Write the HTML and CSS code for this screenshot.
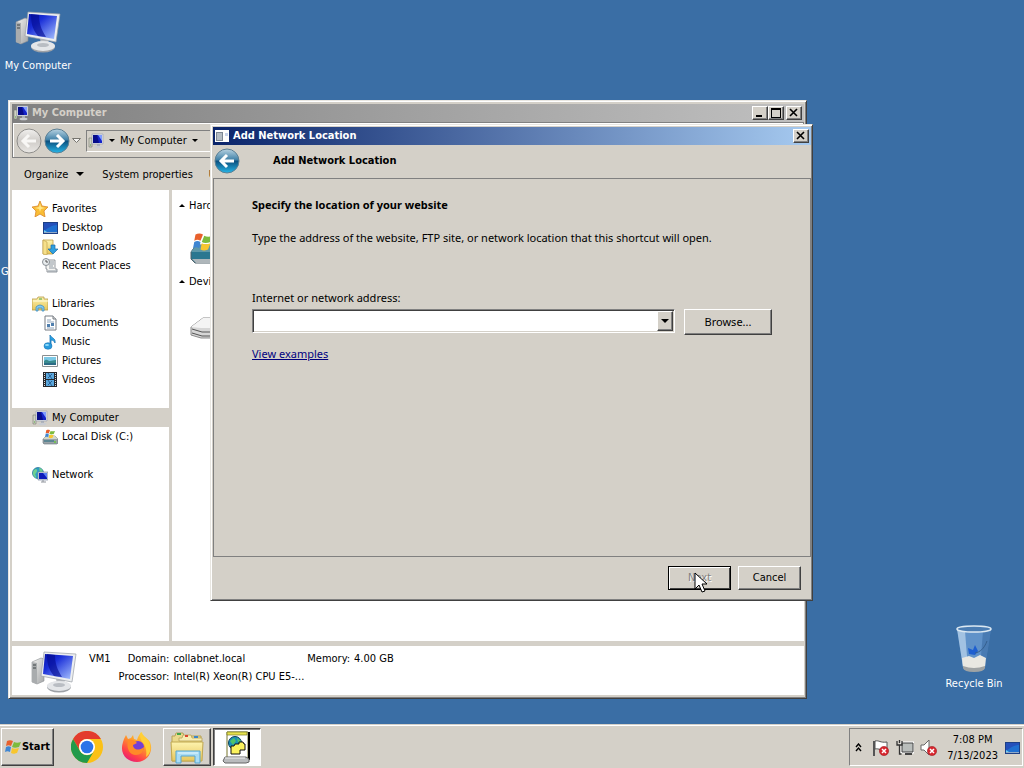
FILE: index.html
```html
<!DOCTYPE html>
<html lang="en">
<head>
    <meta charset="UTF-8">
    <meta name="viewport" content="width=device-width, initial-scale=1.0">
    <title>Add Network Location</title>
    <link rel="stylesheet" href="styles.css">
</head>
<body>
    <!-- Shared icons -->
    <svg class="sprite" width="0" height="0" aria-hidden="true">
        <defs>
            <linearGradient id="screen" x1="0" y1="0" x2="1" y2="1">
                <stop offset="0" stop-color="#0412a8"/>
                <stop offset="0.35" stop-color="#1a2fd8"/>
                <stop offset="1" stop-color="#a9c3ff"/>
            </linearGradient>
            <linearGradient id="metal" x1="0" y1="0" x2="1" y2="1">
                <stop offset="0" stop-color="#f4f4f2"/>
                <stop offset="1" stop-color="#a4a6a8"/>
            </linearGradient>
            <linearGradient id="orb" x1="0" y1="0" x2="0" y2="1">
                <stop offset="0" stop-color="#b9d3e2"/>
                <stop offset="0.46" stop-color="#3d7fa6"/>
                <stop offset="0.5" stop-color="#0b4f7e"/>
                <stop offset="1" stop-color="#27b6e8"/>
            </linearGradient>
            <linearGradient id="orbOff" x1="0" y1="0" x2="0" y2="1">
                <stop offset="0" stop-color="#f1f0ee"/>
                <stop offset="0.5" stop-color="#cfccc8"/>
                <stop offset="1" stop-color="#e9e7e4"/>
            </linearGradient>
            <linearGradient id="folder" x1="0" y1="0" x2="0" y2="1">
                <stop offset="0" stop-color="#fdf3ae"/>
                <stop offset="1" stop-color="#e7c65c"/>
            </linearGradient>
            <linearGradient id="fox" x1="0.8" y1="0" x2="0.2" y2="1">
                <stop offset="0" stop-color="#ffe33d"/>
                <stop offset="0.4" stop-color="#ff9a2a"/>
                <stop offset="0.75" stop-color="#ff3f4a"/>
                <stop offset="1" stop-color="#e3167e"/>
            </linearGradient>
        </defs>
        <symbol id="i-computer" viewBox="0 0 48 44">
            <path d="M2 12 L11 8 L14 9 L14 31 L7 34 L2 32 Z" fill="url(#metal)" stroke="#8b8f92" stroke-width="0.6"/>
            <path d="M2 12 L7 13 L7 34 L2 32 Z" fill="#a9acae"/>
            <path d="M3 15h3M3 18h3" stroke="#3f4447" stroke-width="1.2"/>
            <path d="M26 28 L35 30 L33 36 L27 36 Z" fill="#b9bcc0"/>
            <ellipse cx="29" cy="37" rx="12" ry="5.500" fill="#9da1a6"/>
            <ellipse cx="29" cy="36" rx="12" ry="5" fill="#e4e6e9"/>
            <ellipse cx="29" cy="35" rx="6" ry="2" fill="#b9bdc3"/>
            <path d="M14 2 L46 4 L42 32 L11 26 Z" fill="#eceef0" stroke="#9a9fa6" stroke-width="0.700"/>
            <path d="M15 4 L43 6 L40 29 L13 24 Z" fill="url(#screen)"/>
            <path d="M17 4 L25 5 C25 13 27 19 32 27 L24 26 C18 19 17 12 17 4 Z" fill="#040c94" opacity="0.650"/>
        </symbol>
        <symbol id="i-pc" viewBox="0 0 16 16">
            <path d="M1 5h3v9h-3z" fill="#cfd2c4" stroke="#777b70" stroke-width="0.600"/>
            <path d="M2 12h1" stroke="#4fa83d"/>
            <path d="M4 1h11v10h-11z" fill="#dde0e6" stroke="#8b93a6" stroke-width="0.500"/>
            <path d="M5 2h9v8h-9z" fill="#1422c8"/>
            <path d="M10 2h4v6z" fill="#7f9bff"/>
            <path d="M5 2h4l2 8h-6z" fill="#060c8a"/>
            <path d="M9 11h3v2h-3z" fill="#a9aeb8"/>
            <ellipse cx="10.500" cy="14" rx="4" ry="1.300" fill="#c9ccd2"/>
        </symbol>
        <symbol id="i-flag" viewBox="0 0 16 16">
            <path d="M2 2c2-1 4-1 6 0l-2 5c-2-1-3-1-5 0z" fill="#e8602c"/>
            <path d="M9 3c2 1 4 1 7 0l-2 5c-3 1-5 1-7 0z" fill="#7dbb3c"/>
            <path d="M1 8c2-1 3-1 5 0l-1 5c-2-1-3-1-5 0z" fill="#3f86d2"/>
            <path d="M7 9c2 1 4 1 7 0l-2 5c-3 1-4 1-6 0z" fill="#f8c62e"/>
        </symbol>
        <symbol id="i-disk" viewBox="0 0 16 16">
            <path d="M1 10l3-3h9l3 3v4l-1 1h-13l-1-1z" fill="#9aa3a8" stroke="#66747a" stroke-width="0.600"/>
            <path d="M1 10h15l-3-3h-9z" fill="#d4d8c8"/>
            <path d="M2 12h10" stroke="#487d8c" stroke-width="1.500"/>
            <path d="M12 13h2" stroke="#67c83f" stroke-width="1.500"/>
            <use href="#i-flag" x="2" y="0" width="12" height="10"/>
        </symbol>
        <symbol id="i-desktop" viewBox="0 0 16 16">
            <path d="M1 2h15v12h-15z" fill="#1d3f86"/>
            <path d="M2 3h13v9h-13z" fill="#1f6fd0"/>
            <path d="M2 3h13v2c-5 0-9 3-13 6z" fill="#2450bb"/>
            <path d="M2 12h13v1h-13z" fill="#8fa9c8"/>
            <path d="M2 10l3 2h-3z" fill="#6bd2f2"/>
        </symbol>
        <symbol id="i-badge" viewBox="0 0 10 10">
            <circle cx="5" cy="5" r="4.600" fill="#d8262e" stroke="#9d1c22" stroke-width="0.600"/>
            <path d="M3 3l4 4M7 3l-4 4" stroke="#fff" stroke-width="1.500"/>
        </symbol>
    </svg>

    <main class="desktop">
        <div class="shortcut shortcut-computer">
            <svg width="48" height="44"><use href="#i-computer"/></svg>
            <span>My Computer</span>
        </div>
        <div class="shortcut shortcut-google">
            <span>Google</span>
        </div>
        <div class="shortcut shortcut-bin">
            <svg width="42" height="50" viewBox="0 0 42 50">
                <path d="M4 5 L38 5 L32 43 Q31 47 21 47 Q11 47 10 43 Z" fill="#6d9fd6" opacity="0.750"/>
                <path d="M4 5 L12 7 L15 45 Q11 45 10 43 Z" fill="#cfe3f3" opacity="0.600"/>
                <path d="M38 5 L30 7 L27 45 Q31 45 32 43 Z" fill="#2f5f99" opacity="0.450"/>
                <path d="M9 34 L16 32 L21 34 L27 31 L33 34 L32 43 Q31 47 21 47 Q11 47 10 43 Z" fill="#e9e8e2"/>
                <path d="M10 42 Q21 46 32 42 L32 44 Q31 48 21 48 Q11 48 10 44 Z" fill="#9fa3a4"/>
                <path d="M15 24l5 2 2-5 3 6-3 4-6-1z" fill="#1e5fd0"/>
                <path d="M34 17C31 25 27 28 22 29" fill="none" stroke="#355f8e" stroke-width="1"/>
                <ellipse cx="21" cy="5" rx="17" ry="3" fill="#4a7cb2" stroke="#dbe8f2" stroke-width="1.500"/>
            </svg>
            <span>Recycle Bin</span>
        </div>

        <section class="window explorer">
            <header class="titlebar titlebar-inactive">
                <svg width="16" height="16"><use href="#i-pc"/></svg>
                <h2>My Computer</h2>
                <div class="caption-buttons">
                    <button type="button" class="caption-btn" aria-label="Minimize"><svg width="12" height="10"><path d="M2 7h6v2h-6z"/></svg></button>
                    <button type="button" class="caption-btn" aria-label="Maximize"><svg width="12" height="10"><path d="M1 0h10v10h-10zM2 2v7h8v-7z" fill-rule="evenodd"/></svg></button>
                    <button type="button" class="caption-btn caption-close" aria-label="Close"><svg width="12" height="10"><path d="M2 1l7 7M9 1l-7 7" stroke="#000" stroke-width="1.600"/></svg></button>
                </div>
            </header>

            <nav class="nav-bar">
                <button type="button" class="orb" aria-label="Back" disabled><svg width="26" height="26" viewBox="0 0 26 26"><circle cx="13" cy="13" r="12" fill="url(#orbOff)" stroke="#8f8e8b"/><path d="M20 13h-12M13 7l-6 6 6 6" fill="none" stroke="#f8f7f5" stroke-width="3"/></svg></button>
                <button type="button" class="orb" aria-label="Forward"><svg width="26" height="26" viewBox="0 0 26 26"><circle cx="13" cy="13" r="12" fill="url(#orb)" stroke="#5c7f93"/><path d="M6 13h12M13 7l6 6-6 6" fill="none" stroke="#fff" stroke-width="3"/></svg></button>
                <button type="button" class="orb-menu" aria-label="Recent pages"><svg width="9" height="6"><path d="M0.500 0.500h8l-4 4z" fill="#f4f3f1" stroke="#77756f"/></svg></button>
                <div class="address">
                    <svg width="16" height="16"><use href="#i-pc"/></svg>
                    <svg width="6" height="4"><path d="M0 0h6l-3 3z"/></svg>
                    <span>My Computer</span>
                    <svg width="6" height="4"><path d="M0 0h6l-3 3z"/></svg>
                </div>
            </nav>

            <div class="command-bar">
                <button type="button" class="command command-menu">Organize <svg width="8" height="5"><path d="M0 0h8l-4 4z"/></svg></button>
                <button type="button" class="command">System properties</button>
                <button type="button" class="command">Uninstall or change a program</button>
            </div>

            <div class="panes">
                <ul class="tree">
                    <li class="group"><svg width="16" height="16"><path d="M8 0l2 5 6 1-4 4 1 6-5-3-5 3 1-6-4-4 6-1z" fill="#f9bd35" stroke="#d9872a" stroke-width="0.800"/><path d="M8 2l1 4 4 1-4 1-1 3-1-3-4-1 4-1z" fill="#ffe78a"/></svg>Favorites</li>
                    <li><svg width="16" height="16"><use href="#i-desktop"/></svg>Desktop</li>
                    <li><svg width="16" height="16"><path d="M1 1h10v14h-10z" fill="url(#folder)" stroke="#bd9c45" stroke-width="0.800"/><path d="M1 1l4 2v13l-4-1z" fill="#f6e08a" stroke="#bd9c45" stroke-width="0.600"/><path d="M9 6h4v4h3l-5 5-5-5h3z" fill="#2fa0e0" stroke="#1c6ba6" stroke-width="0.700"/></svg>Downloads</li>
                    <li><svg width="16" height="16"><path d="M4 2h9v9h2v3h-10v-3h-1z" fill="#f5f5f3" stroke="#8a9096" stroke-width="0.900"/><path d="M7 4h5M7 6h5M7 8h4M7 10h5M6 13h9" stroke="#8f9aa4"/><circle cx="4" cy="4" r="3.500" fill="#e8ecee" stroke="#8a9096"/><path d="M4 2v2h2" fill="none" stroke="#555"/></svg>Recent Places</li>
                    <li class="gap"></li>
                    <li class="group"><svg width="16" height="16"><path d="M0 3h5l1-2h6v2h4v11h-16z" fill="url(#folder)" stroke="#b89a45" stroke-width="0.800"/><path d="M1 5h15" stroke="#fffbe0"/><path d="M7 3h3" stroke="#49a34c"/><path d="M4 15v-4q4-4 8 0v4h-2v-3h-4v3z" fill="#85c9ef" stroke="#3f8fc0" stroke-width="0.800"/></svg>Libraries</li>
                    <li><svg width="16" height="16"><path d="M3 1h8l3 3v11h-11z" fill="#fff" stroke="#777d84"/><path d="M11 1v3h3" fill="#ddd" stroke="#777d84"/><path d="M5 5h4M5 7h7M5 13h7" stroke="#8fa4bb"/><path d="M5 9h3v3h-3zM9 8h3v3h-3z" fill="#4f7fae"/></svg>Documents</li>
                    <li><svg width="16" height="16"><path d="M8 1c1 3 6 3 5 8-1-2-2-3-4-3v6h-1z" fill="#2aa3e6" stroke="#1c76b5" stroke-width="0.800"/><ellipse cx="6" cy="12" rx="4" ry="3.300" fill="#299bdd" stroke="#1c76b5" stroke-width="0.600"/><ellipse cx="5" cy="11" rx="2" ry="1" fill="#92dcfa"/></svg>Music</li>
                    <li><svg width="16" height="16"><path d="M0.500 2.500h15v11h-15z" fill="#fff" stroke="#8a8f91"/><path d="M2 4h12v8h-12z" fill="#7cc9e6"/><path d="M2 8c3-3 4 0 6 0s3-1 6-1v3h-12z" fill="#3a8b8f"/><path d="M2 10h12v2h-12z" fill="#2d6c86"/></svg>Pictures</li>
                    <li><svg width="16" height="16"><path d="M1 0h14v15h-14z" fill="#26282c"/><path d="M4 1h8v6h-8zM4 8h8v6h-8z" fill="#5aa7dc"/><path d="M6 1l4 6M10 2l-4 4M6 8l4 6M10 9l-4 4" stroke="#2a5f93"/><path d="M2.500 1v14M13.500 1v14" stroke="#d9dcdf" stroke-width="1" stroke-dasharray="1 1"/></svg>Videos</li>
                    <li class="gap"></li>
                    <li class="group selected"><svg width="16" height="16"><use href="#i-pc"/></svg>My Computer</li>
                    <li><svg width="16" height="16"><use href="#i-disk"/></svg>Local Disk (C:)</li>
                    <li class="gap"></li>
                    <li class="group"><svg width="16" height="16"><circle cx="6" cy="6" r="5.500" fill="#2f9dc4" stroke="#176a8c" stroke-width="0.700"/><path d="M2 3c3-3 4 1 2 3s1 3 0 5c-3-2-4-5-2-8zM7 1c3 0 4 3 4 5l-3-1z" fill="#6fd08f"/><path d="M6 5h10v8h-10z" fill="#d5dae2" stroke="#6e7d98" stroke-width="0.600"/><path d="M7 6h8v6h-8z" fill="#0e1cbb"/><path d="M11 6h4v5z" fill="#5c80f5"/><path d="M9 15h5M11 13v2" stroke="#8f949c"/></svg>Network</li>
                </ul>
                <div class="files">
                    <h3><svg width="6" height="4"><path d="M0 3h6l-3-3z"/></svg>Hard Disk</h3>
                    <div class="drive">
                        <svg width="48" height="40" viewBox="0 0 48 40"><path d="M1 22l5-7h38l4 7v7l-3 4h-40l-4-4z" fill="#2b7790" stroke="#51626b"/><path d="M1 22h47l-4-7h-38z" fill="#5f98a8"/><path d="M2 29h45l-2 4h-39z" fill="#aeb6ba"/><use href="#i-flag" x="2" y="2" width="22" height="20"/></svg>
                    </div>
                    <h3><svg width="6" height="4"><path d="M0 3h6l-3-3z"/></svg>Devices</h3>
                    <div class="drive">
                        <svg width="48" height="40" viewBox="0 0 48 40"><path d="M1 21l12-9h34v15l-8 5h-28l-10-3z" fill="#d6d6d6" stroke="#8b8b8b"/><path d="M1 21l12-9h34l-8 10h-28z" fill="#f4f4f4"/><path d="M2 23l10 3h28M2 27l10 3h28" fill="none" stroke="#555"/></svg>
                    </div>
                </div>
            </div>

            <footer class="details">
                <svg width="48" height="44"><use href="#i-computer"/></svg>
                <strong class="machine">VM1</strong>
                <dl class="facts">
                    <dt>Domain:</dt><dd>collabnet.local</dd>
                    <dt>Processor:</dt><dd>Intel(R) Xeon(R) CPU E5-...</dd>
                </dl>
                <dl class="facts">
                    <dt>Memory:</dt><dd>4.00 GB</dd>
                </dl>
            </footer>
        </section>

        <section class="window wizard" role="dialog" aria-labelledby="wizardTitle">
            <header class="titlebar">
                <svg width="16" height="16"><path d="M1 2h14v12h-14z" fill="#fff"/><path d="M2 4h7v9h-7z" fill="#7d8894"/><path d="M3 5h5v7h-5z" fill="#b4bcc4"/><path d="M11 5h3v3h-3z" fill="#c8d4ea"/></svg>
                <h2>Add Network Location</h2>
                <div class="caption-buttons">
                    <button type="button" class="caption-btn" aria-label="Close"><svg width="12" height="10"><path d="M2 1l7 7M9 1l-7 7" stroke="#000" stroke-width="1.600"/></svg></button>
                </div>
            </header>
            <div class="wizard-head">
                <button type="button" class="orb" aria-label="Back"><svg width="26" height="26" viewBox="0 0 26 26"><circle cx="13" cy="13" r="12" fill="url(#orb)" stroke="#5c7f93"/><path d="M20 13h-12M13 7l-6 6 6 6" fill="none" stroke="#fff" stroke-width="3"/></svg></button>
                <h1 id="wizardTitle">Add Network Location</h1>
            </div>
            <form class="wizard-form">
                <div class="wizard-body">
                    <h2>Specify the location of your website</h2>
                    <p>Type the address of the website, FTP site, or network location that this shortcut will open.</p>
                    <label for="address">Internet or network address:</label>
                    <div class="address-row">
                        <div class="combo">
                            <input type="text" id="address" name="address">
                            <button type="button" class="combo-btn" aria-label="Show addresses"><svg width="8" height="5"><path d="M0 0h8l-4 4z"/></svg></button>
                        </div>
                        <button type="button" class="btn btn-browse">Browse...</button>
                    </div>
                    <a href="#">View examples</a>
                </div>
                <div class="wizard-actions">
                    <button type="submit" class="btn btn-default" disabled>Next</button>
                    <button type="button" class="btn">Cancel</button>
                </div>
            </form>
        </section>

        <svg class="cursor" width="14" height="22" viewBox="0 0 14 22"><path d="M1 1v16l4-4 3 7 3-1-3-7h5z" fill="#fff" stroke="#000"/></svg>
    </main>

    <footer class="taskbar">
        <button type="button" class="task start"><svg width="16" height="16"><use href="#i-flag"/></svg>Start</button>
        <button type="button" class="launcher" aria-label="Google Chrome">
            <svg width="32" height="32" viewBox="0 0 32 32">
                <circle cx="16" cy="16" r="16" fill="#fbc116"/>
                <path d="M2.100 8A16 16 0 0 1 29.900 8H16a8 8 0 0 0-7 12z" fill="#e33b2e"/>
                <path d="M2.100 8A16 16 0 0 0 16 32l7-12a8 8 0 0 1-14 0z" fill="#229a4b"/>
                <circle cx="16" cy="16" r="8" fill="#fff"/>
                <circle cx="16" cy="16" r="6.300" fill="#2b73e8"/>
            </svg>
        </button>
        <button type="button" class="launcher" aria-label="Firefox">
            <svg width="32" height="32" viewBox="0 0 32 32">
                <path d="M3 8l2-4 2 4 3-1 2-3 1 4 3 1c1-4 3-7 5-8 0 4 5 5 8 10 4 10-3 20-13 20S-2 23 2 11z" fill="url(#fox)"/>
                <circle cx="17" cy="16" r="6" fill="#7440d4"/>
                <path d="M7 9c3-1 7 0 9 3l-4 2c0 4 5 7 11 2 0 5-4 8-8 8-6 0-10-6-8-15z" fill="#ff8a28"/>
                <path d="M20 1c0 4 5 5 8 10 3 7 1 12-3 15 1-5 0-9-2-13-3-3-5-8-3-12z" fill="#ffcf37"/>
            </svg>
        </button>
        <button type="button" class="task task-window" aria-label="My Computer">
            <svg width="34" height="34" viewBox="0 0 34 34">
                <path d="M2 6h3l1-3h7l1 3h17v25h-29z" fill="#ead98c" stroke="#b7a258"/>
                <path d="M9 8h3l1-3h8l1 3h10v3h-23z" fill="#f6ecb2" stroke="#b7a258" stroke-width="0.800"/>
                <path d="M7 4h4" stroke="#3fa64a" stroke-width="2"/><path d="M15 6h3" stroke="#d9442f" stroke-width="2"/><path d="M24 7h4" stroke="#3b86c9" stroke-width="2"/>
                <path d="M1 12h32l-1 19h-30z" fill="url(#folder)" stroke="#c1a850"/>
                <path d="M6 33v-12h24v12h-5v-7h-14v7z" fill="#a9dcf5" stroke="#57a5cf"/>
                <path d="M8 23h20" stroke="#e6f7ff"/>
            </svg>
        </button>
        <button type="button" class="task task-window task-active" aria-label="Add Network Location">
            <svg width="30" height="34" viewBox="0 0 30 34">
                <path d="M5 2h21v26h-21z" fill="#fff" stroke="#77752a"/>
                <path d="M27 2v28" stroke="#000" stroke-width="2"/>
                <path d="M5 2h20v3h-20z" fill="#e6e24c" stroke="#77752a" stroke-width="0.700"/>
                <path d="M3 27h21l3 2v3l-3 1h-21l-2-2z" fill="#b9bbbd" stroke="#666"/>
                <path d="M3 28h20" stroke="#f2f2f2"/>
                <circle cx="13" cy="13" r="6.500" fill="#1a91b8" stroke="#0b3f55"/>
                <path d="M8 11l4-3 2 3-3 4zM15 8l4 3-3 2z" fill="#4fc26a"/>
                <path d="M9 16h3l1-2h4v-2h4l1 2h1v6h-5v4h-9z" fill="#fbf25e" stroke="#111"/>
            </svg>
        </button>
        <div class="tray">
            <svg width="7" height="9"><path d="M1 4l2.500-3 2.500 3M1 8l2.500-3 2.500 3" fill="none" stroke="#000" stroke-width="1.400"/></svg>
            <svg width="18" height="18"><path d="M2 2v15" stroke="#555" stroke-width="2"/><path d="M3 2c4-1 5 2 12 1v8c-6 1-8-2-12-1z" fill="#fff" stroke="#555"/><use href="#i-badge" x="7" y="7" width="10" height="10"/></svg>
            <svg width="18" height="18"><path d="M6 4h11v9h-11z" fill="#b9bdbb" stroke="#fff" stroke-width="3"/><path d="M6 4h11v9h-11z" fill="#b9bdbb" stroke="#444"/><path d="M9 15h7" stroke="#444" stroke-width="2"/><path d="M1 2v4h5v-4M3.500 1v3M3.500 6v9h2" fill="none" stroke="#333" stroke-width="1.300"/></svg>
            <svg width="18" height="18"><path d="M1 6h3l5-5v15l-5-5h-3z" fill="#fff" stroke="#666"/><use href="#i-badge" x="7" y="7" width="10" height="10"/></svg>
            <time class="clock" datetime="2023-07-13T19:08"><span>7:08 PM</span><span>7/13/2023</span></time>
            <svg width="16" height="16"><use href="#i-desktop"/></svg>
        </div>
    </footer>
</body>
</html>
```
FILE: styles.css
```css
* {
    margin: 0;
    padding: 0;
    box-sizing: border-box;
}

body {
    font-family: Tahoma, 'DejaVu Sans Condensed', 'DejaVu Sans', sans-serif;
    font-size: 11px;
    line-height: 16px;
    color: #000;
    background: #3a6ea5;
    height: 100vh;
    display: flex;
    flex-direction: column;
    overflow: hidden;
}

button, input {
    font: inherit;
    color: inherit;
}

button {
    background: none;
    border: none;
}

svg {
    display: block;
    flex: none;
}

.sprite {
    position: absolute;
}

h1, h2, h3 {
    font-size: 11px;
}

/* Desktop */
.desktop {
    flex: 1;
    position: relative;
    min-height: 0;
}

.shortcut {
    position: absolute;
    width: 76px;
    display: flex;
    flex-direction: column;
    align-items: center;
    gap: 4px;
    color: #fff;
    white-space: nowrap;
}

.shortcut-computer {
    left: 0;
    top: 10px;
}

.shortcut-google {
    left: 1px;
    top: 264px;
    align-items: flex-start;
}

.shortcut-bin {
    right: 12px;
    bottom: 32px;
    gap: 2px;
}

/* Windows */
.window {
    position: absolute;
    display: flex;
    flex-direction: column;
    background: #d4d0c8;
    border: 1px solid;
    border-color: #e8e6e1 #404040 #404040 #e8e6e1;
    box-shadow: inset 1px 1px #fff, inset -1px -1px #808080;
}

.explorer {
    left: 8px;
    right: 217px;
    top: 100px;
    bottom: 25px;
    padding: 3px 2px 3px 3px;
}

.wizard {
    left: 210px;
    right: 211px;
    top: 124px;
    bottom: 123px;
    padding: 2px 1px 2px 2px;
}

.titlebar {
    display: flex;
    align-items: center;
    gap: 3px;
    height: 18px;
    padding: 0 2px 0 1px;
    color: #fff;
    background: linear-gradient(to right, #0a246a, #a6caf0);
}

.titlebar-inactive {
    color: #d4d0c8;
    background: linear-gradient(to right, #808080, #c0c0c0);
}

.caption-buttons {
    display: flex;
    margin-left: auto;
}

.caption-btn {
    width: 16px;
    height: 14px;
    padding: 1px;
    background: #d4d0c8;
    border: 1px solid;
    border-color: #fff #404040 #404040 #fff;
    box-shadow: inset -1px -1px #808080;
}

.caption-close {
    margin-left: 2px;
}

.orb {
    width: 26px;
    height: 26px;
}

/* Explorer */
.nav-bar {
    display: flex;
    align-items: center;
    height: 36px;
    padding: 1px 3px 0;
    gap: 2px;
    border: 1px solid #808080;
    box-shadow: inset 1px 1px #fff;
}

.orb-menu {
    width: 10px;
}

.address {
    flex: 1;
    display: flex;
    align-items: center;
    gap: 5px;
    height: 22px;
    margin-left: 2px;
    padding-left: 1px;
    border: 1px solid;
    border-color: #808080 #fff #fff #808080;
}

.command-bar {
    display: flex;
    align-items: center;
    gap: 16px;
    height: 32px;
    padding: 1px 12px 0;
    overflow: hidden;
}

.command {
    display: flex;
    align-items: center;
    gap: 8px;
    white-space: nowrap;
}

.command-menu {
    margin-right: 2px;
}

.panes {
    flex: 1;
    display: flex;
    min-height: 0;
    background: #fff;
    border-bottom: 5px solid #d4d0c8;
}

.tree {
    width: 160px;
    padding-top: 9px;
    list-style: none;
    border-right: 3px solid #d4d0c8;
}

.tree li {
    display: flex;
    align-items: center;
    gap: 4px;
    height: 19px;
    padding: 1px 0 0 30px;
}

.tree .group {
    padding-left: 20px;
}

.tree .selected {
    background: #d4d0c8;
}

.files {
    flex: 1;
    padding: 8px 7px;
    overflow: hidden;
}

.files h3 {
    display: flex;
    align-items: center;
    gap: 4px;
    font-weight: normal;
    white-space: nowrap;
}

.drive {
    height: 60px;
    padding: 16px 11px 0;
}

.details {
    display: flex;
    height: 49px;
    padding: 4px 18px 0;
    background: #fff;
}

.machine {
    margin: 1px 8px 0 11px;
    font-weight: normal;
}

.facts {
    display: grid;
    grid-template-columns: auto auto;
    align-content: start;
    gap: 2px 4px;
    margin-top: 1px;
}

.facts + .facts {
    margin-left: 3px;
}

.facts dt {
    text-align: right;
}

/* Wizard */
.wizard-head {
    display: flex;
    align-items: center;
    gap: 33px;
    height: 33px;
    padding: 0 1px 2px;
}

.wizard-form {
    flex: 1;
    display: flex;
    flex-direction: column;
}

.wizard-body {
    flex: 1;
    padding: 18px 38px;
    border: 1px solid #808080;
    font-family: 'Noto Sans', 'Open Sans', sans-serif;
}

.wizard-body h2 {
    margin-bottom: 17px;
}

.wizard-body p {
    margin-bottom: 44px;
}

.wizard-body label {
    display: block;
    margin-bottom: 3px;
}

.wizard-body a {
    color: #00007f;
}

.address-row {
    display: flex;
    gap: 9px;
    margin-bottom: 11px;
}

.combo {
    flex: 1;
    display: flex;
    height: 24px;
    padding: 1px;
    background: #fff;
    border: 1px solid;
    border-color: #808080 #fff #fff #808080;
    box-shadow: inset 1px 1px #404040, inset -1px -1px #d4d0c8;
}

.combo input {
    flex: 1;
    min-width: 0;
    padding: 0 3px;
    border: none;
    outline: none;
    background: transparent;
}

.combo-btn {
    display: flex;
    align-items: center;
    justify-content: center;
    width: 16px;
    background: #d4d0c8;
    border: 1px solid;
    border-color: #fff #404040 #404040 #fff;
    box-shadow: inset -1px -1px #808080;
}

.btn {
    width: 63px;
    height: 24px;
    background: #d4d0c8;
    border: 1px solid;
    border-color: #fff #404040 #404040 #fff;
    box-shadow: inset -1px -1px #808080;
}

.btn-browse {
    width: 88px;
    height: 26px;
}

.btn-default {
    border-color: #000;
    box-shadow: inset 1px 1px #fff, inset -1px -1px #404040;
}

.btn:disabled {
    color: #808080;
    text-shadow: 1px 1px #fff;
}

.wizard-actions {
    display: flex;
    justify-content: flex-end;
    gap: 7px;
    padding: 9px 10px 8px;
}

.cursor {
    position: absolute;
    left: 694px;
    top: 572px;
}

/* Taskbar */
.taskbar {
    display: flex;
    align-items: center;
    height: 44px;
    padding: 3px 1px 1px;
    background: #d4d0c8;
    box-shadow: inset 0 1px #d4d0c8, inset 0 2px #fff;
}

.task {
    display: flex;
    align-items: center;
    justify-content: center;
    height: 38px;
    border: 1px solid;
    border-color: #fff #404040 #404040 #fff;
    box-shadow: inset -1px -1px #808080;
}

.start {
    width: 53px;
    gap: 1px;
    margin-right: 8px;
    font-weight: bold;
}

.launcher {
    display: flex;
    align-items: center;
    justify-content: center;
    width: 50px;
}

.task-window {
    width: 48px;
    margin-left: 1px;
    margin-right: 1px;
}

.task-active {
    background: #fff;
    border-color: #404040 #fff #fff #404040;
    box-shadow: inset 1px 1px #808080;
}

.tray {
    display: flex;
    align-items: center;
    gap: 6px;
    height: 38px;
    margin-left: auto;
    padding: 1px 2px 0 5px;
    border: 1px solid;
    border-color: #808080 #fff #fff #808080;
}

.tray svg:first-child {
    margin-right: 4px;
}

.clock {
    display: flex;
    flex-direction: column;
    align-items: center;
    margin-left: 3px;
}
```
